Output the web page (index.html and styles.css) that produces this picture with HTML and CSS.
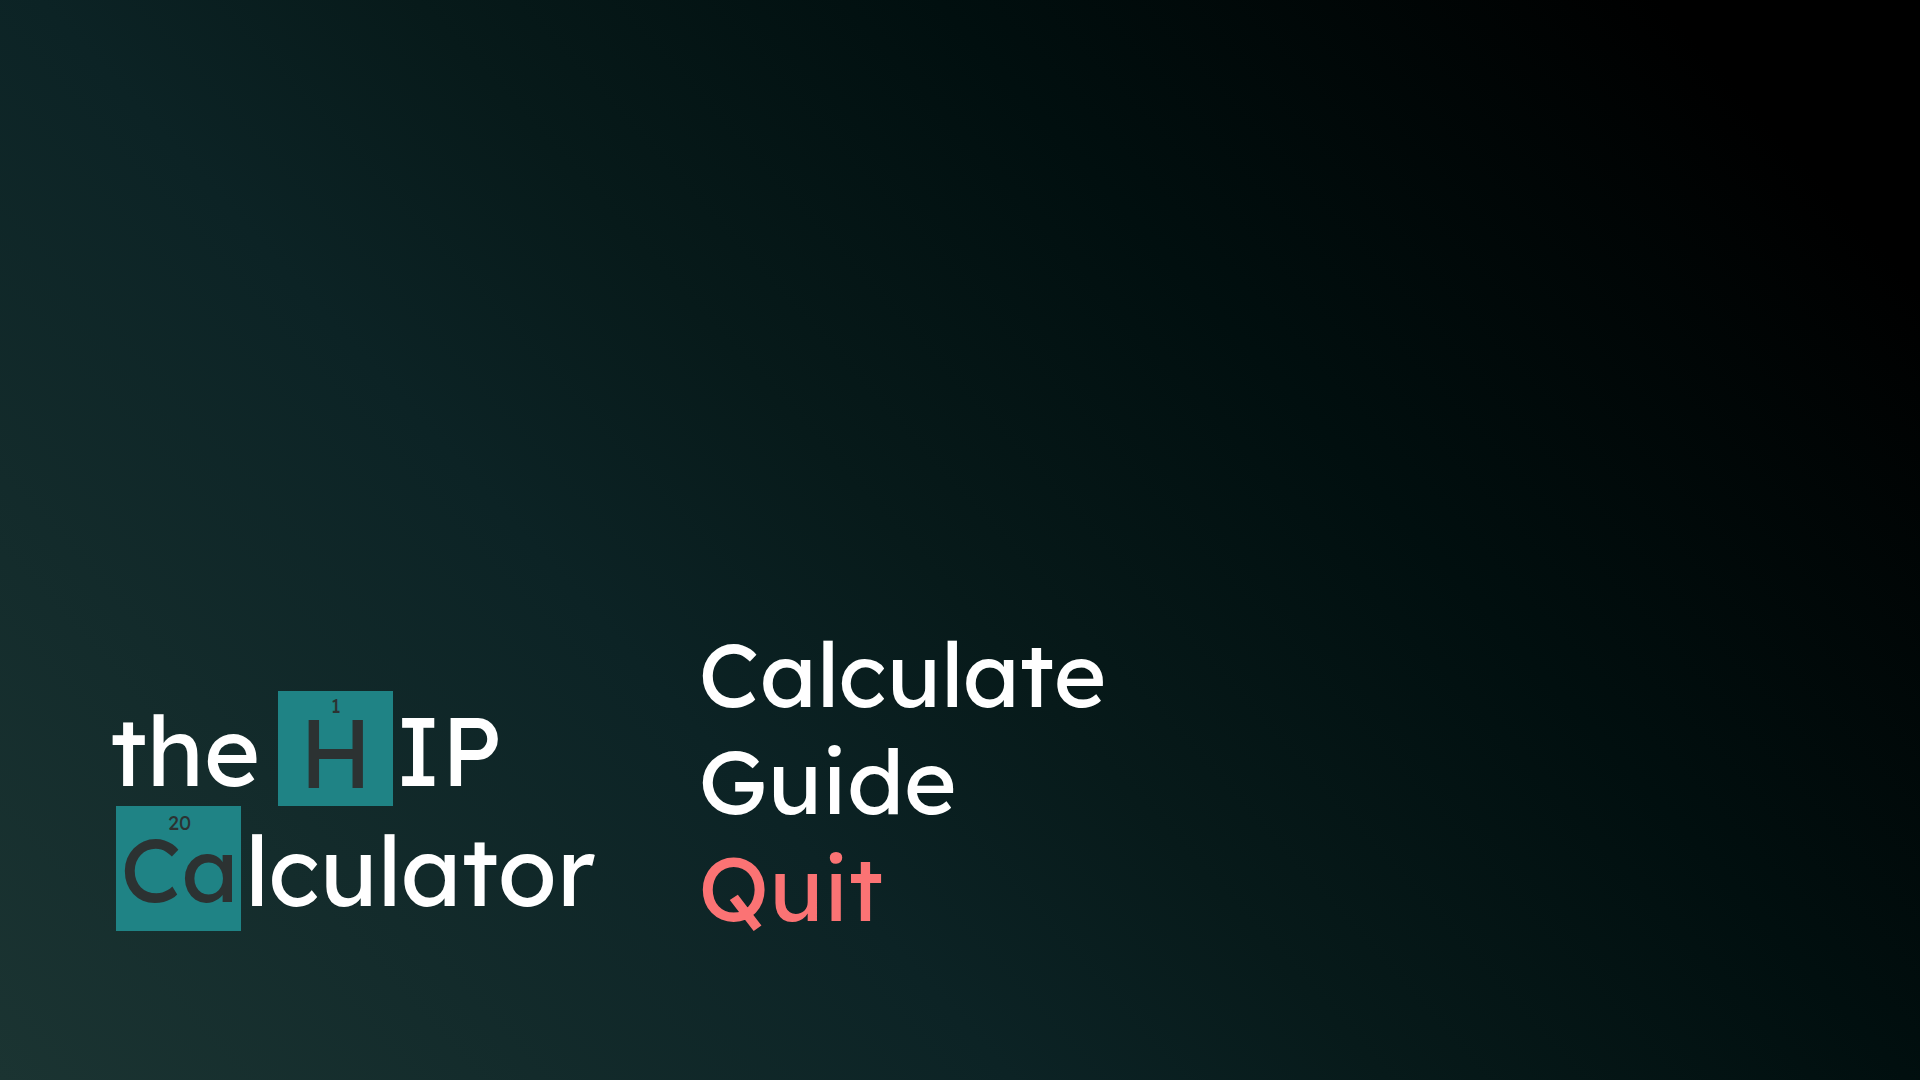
FILE: index.html
```html
<!DOCTYPE html>
<html lang="en">
<head>
<meta charset="utf-8">
<meta name="viewport" content="width=device-width, initial-scale=1">
<title>the HIP Calculator</title>
<link rel="stylesheet" href="styles.css">
</head>
<body>
<main class="screen">
  <h1 class="title">
    <span class="title-row">
      <span class="word">the</span>
      <span class="element element-h"><span class="number">1</span><span class="symbol">H</span></span>
      <span class="word">IP</span>
    </span>
    <span class="title-row title-row-second">
      <span class="element element-ca"><span class="number">20</span><span class="symbol">Ca</span></span>
      <span class="word">lculator</span>
    </span>
  </h1>
  <nav class="menu" aria-label="Main menu">
    <button class="menu-item" type="button">Calculate</button>
    <button class="menu-item" type="button">Guide</button>
    <button class="menu-item menu-item-quit" type="button">Quit</button>
  </nav>
</main>
</body>
</html>
```

FILE: styles.css
```css
* {
  box-sizing: border-box;
}

body {
  margin: 0;
  color: #fff;
  font-family: Lexend, Inter, "Liberation Sans", sans-serif;
  font-weight: 400;
  font-feature-settings: "cv11", "cv08";
  background: #000;
}

.screen {
  display: flex;
  align-items: flex-end;
  gap: 103px;
  min-height: 100vh;
  padding: 0 110px 139px;
  background: linear-gradient(48deg, #1b3432 0%, #0c2325 35%, #071a1a 48%, #010f0f 66%, #000 91%);
}

.title {
  display: flex;
  flex-direction: column;
  margin: 0 0 10px;
  font-size: 96px;
  font-weight: 400;
  line-height: 111px;
}

.title-row {
  display: flex;
  align-items: flex-start;
  gap: 2px;
}

.title-row-second {
  gap: 4px;
  padding-left: 6px;
}

.word {
  padding-top: 4px;
}

.title-row-second .word {
  padding-top: 9px;
}

.element {
  display: flex;
  flex-direction: column;
  align-items: center;
  color: #2c3232;
  background: #1f8385;
}

.element-h {
  width: 115px;
  height: 115px;
  margin-left: 16px;
  padding-top: 3px;
}

.element-ca {
  width: 125px;
  height: 125px;
  padding: 5px 0 0 2px;
}

.number {
  font-size: 20px;
  line-height: 24px;
}

.symbol {
  font-size: 96px;
  line-height: 68px;
}

.element-ca .symbol {
  font-size: 90px;
}

.menu {
  display: flex;
  flex-direction: column;
  align-items: flex-start;
}

.menu-item {
  padding: 0;
  border: 0;
  color: inherit;
  font: inherit;
  font-feature-settings: inherit;
  font-size: 90px;
  line-height: 107px;
  background: none;
  cursor: pointer;
}

.menu-item-quit {
  color: #fb7374;
}
```
